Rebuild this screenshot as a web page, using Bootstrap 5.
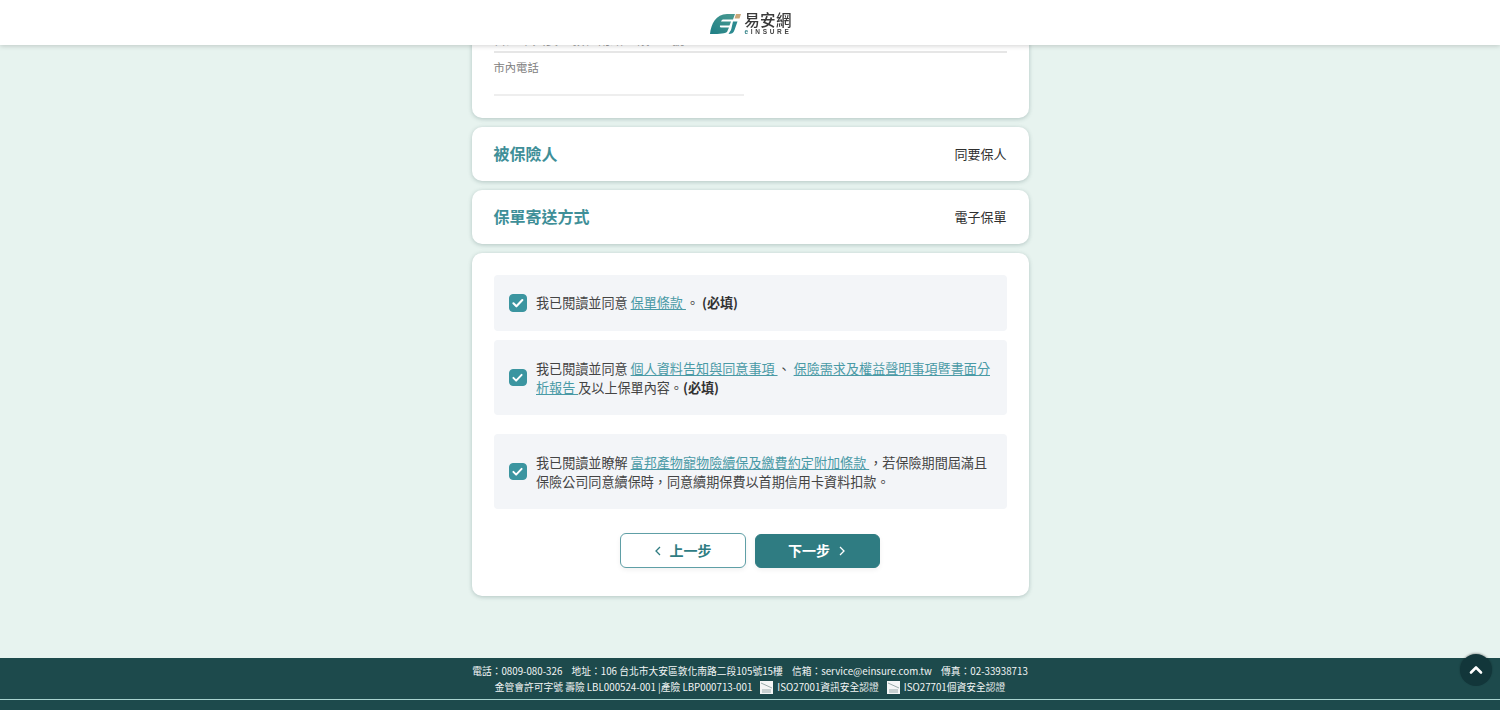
<!DOCTYPE html>
<html lang="zh-Hant">
<head>
    <meta charset="UTF-8">
    <meta name="viewport" content="width=device-width, initial-scale=1.0">
    <title>易安網 eINSURE</title>

    <link href="https://cdn.jsdelivr.net/npm/bootstrap@5.3.3/dist/css/bootstrap.min.css" rel="stylesheet">

    <style>
        html, body {
            height: 710px;
            overflow: hidden;
        }
        body {
            background: #e7f3ef;
            color: #333;
            font-family: "Noto Sans CJK TC", "Noto Sans", sans-serif;
        }
        .site-head {
            position: fixed;
            top: 0;
            left: 0;
            right: 0;
            height: 45px;
            background: #fff;
            box-shadow: 0 1px 5px rgba(0, 0, 0, .18);
            z-index: 10;
        }
        .logo-wrap {
            margin-left: 2px;
        }
        .logo-mark {
            margin: 2px 3px 0 0;
        }
        .logo-name {
            font-size: 15.5px;
            line-height: 16px;
            font-weight: 500;
            color: #3a3a3a;
            letter-spacing: .3px;
        }
        .logo-sub {
            font-family: "Liberation Sans", sans-serif;
            font-size: 6.5px;
            line-height: 7px;
            font-weight: 700;
            letter-spacing: 2.7px;
            margin-top: 1px;
            color: #444;
            white-space: nowrap;
        }
        .logo-sub b {
            color: #2f7f84;
        }
        .sheet-col {
            width: 557px;
            height: 658px;
            margin: 0 auto;
        }
        .sheet {
            background: #fff;
            border: 0;
            border-radius: 10px;
            box-shadow: 0 1px 4px rgba(40, 80, 80, .28);
            padding: 0 22px;
        }
        .sheet-top {
            height: 118px;
            border-radius: 0 0 10px 10px;
            margin-bottom: 9px;
        }
        .hidden-value {
            height: 53px;
            border-bottom: 2px solid #e6e6e6;
            font-size: 13px;
            line-height: 18px;
            padding-top: 30px;
            color: #999;
        }
        .field-label {
            font-size: 11.3px;
            line-height: 16px;
            margin-top: 6px;
            color: #808080;
        }
        .field-line {
            width: 250px;
            height: 21px;
            border-bottom: 2px solid #eee;
        }
        .sheet-row {
            height: 54px;
            margin-bottom: 9px;
        }
        .row-title {
            font-size: 16px;
            font-weight: 700;
            color: #3f8f98;
            margin-top: -2px;
        }
        .row-value {
            font-size: 13px;
            font-weight: 400;
            color: #2f2f2f;
        }
        .sheet-consent {
            height: 343px;
            padding-top: 22px;
        }
        .consent-box {
            background: #f3f5f8;
            border-radius: 4px;
            padding: 0 14px 0 15.5px;
            font-size: 13.1px;
            line-height: 19px;
            color: #444;
        }
        .consent-one > span {
            margin-top: -2px;
        }
        .consent-one {
            height: 56px;
            margin-bottom: 9px;
        }
        .consent-two {
            height: 75px;
            margin-bottom: 19px;
        }
        .consent-box .form-check-input {
            width: 17.5px;
            height: 17.5px;
            margin: 0 9.5px 0 0;
            flex: none;
            background-color: #3b95a0;
            border-color: #3b95a0;
            border-radius: 4px;
            box-shadow: none;
            background-image: url("data:image/svg+xml,%3csvg xmlns='http://www.w3.org/2000/svg' viewBox='0 0 20 20'%3e%3cpath fill='none' stroke='%23fff' stroke-linecap='round' stroke-linejoin='round' stroke-width='2.6' d='M4.500 10.500l3.700 3.700 7.300-7.700'/%3e%3c/svg%3e");
        }
        .consent-box a {
            color: #4a9aa6;
        }
        .consent-box b {
            color: #333;
            font-weight: 700;
        }
        .btn-step {
            height: 35px;
            border-radius: 6px;
            font-size: 14px;
            font-weight: 700;
            padding: 0;
            box-shadow: 0 2px 5px rgba(0, 0, 0, .06);
        }
        .btn-back {
            width: 126px;
            background: #fff;
            color: #2f7c82;
            border: 1px solid #5f9fa6;
        }
        .btn-next {
            width: 125px;
            height: 34px;
            background: #2f7c82;
            color: #fff;
            border: 1px solid #2f7c82;
        }
        .btn-row {
            gap: 9px;
            margin-top: 5px;
            margin-left: -1px;
        }
        .site-foot {
            height: 52px;
            background: #1d4a4c;
            color: #f2f5f5;
            font-size: 9.75px;
            line-height: 16px;
            padding-top: 5px;
        }
        .foot-rule {
            height: 1px;
            background: #a9d4d0;
            margin-top: 4px;
        }
        .foot-sep {
            margin-left: 7px;
        }
        .to-top {
            position: fixed;
            left: 1460px;
            top: 654px;
            width: 32px;
            height: 32px;
            border-radius: 50%;
            background: #12363a;
            box-shadow: 0 -1px 2px rgba(0, 0, 0, .3);
            z-index: 11;
        }
    </style>
</head>
<body>

    <!-- Header -->
    <header class="site-head d-flex justify-content-center align-items-center">
        <div class="logo-wrap d-flex align-items-center">
            <svg width="31" height="20" viewBox="0 0 31 20" class="logo-mark" aria-hidden="true">
                <defs>
                    <linearGradient id="leaf" x1="0" y1="1" x2="1" y2="0">
                        <stop offset="0" stop-color="#1f7f86"/>
                        <stop offset="1" stop-color="#4a9a90"/>
                    </linearGradient>
                </defs>
                <path fill="url(#leaf)" d="M0 20 C1 10 6 0 17 0 L25 0 L23 5.500 L13 5.500 C12 5.500 11.500 6.500 11 7.500 L21 7.500 L19.500 11.500 L10 11.500 C9.800 12.500 10 13.500 11 13.500 L19 13.500 L17 18 C14 20 6 20 0 20 Z"/>
                <path fill="#2c8a90" d="M23 7.500 L27.500 7.500 L24.500 16 C23.500 19 21.500 20 18.500 20 L20 17.500 C20.500 17 21 16 21.300 15 Z"/>
                <path fill="#c9a77a" d="M26 0 L31 0 L29.500 4.500 L24.500 4.500 Z"/>
            </svg>
            <div class="text-center">
                <div class="logo-name">易安網</div>
                <div class="logo-sub"><b>e</b>INSURE</div>
            </div>
        </div>
    </header>

    <main class="sheet-col">
        <!-- Contact info, scrolled up behind the header -->
        <section class="card sheet sheet-top">
            <div class="hidden-value">台北市大安區敦化南路二段105號</div>
            <div class="field-label">市內電話</div>
            <div class="field-line"></div>
        </section>

        <section class="card sheet sheet-row flex-row justify-content-between align-items-center">
            <span class="row-title">被保險人</span>
            <span class="row-value">同要保人</span>
        </section>

        <section class="card sheet sheet-row flex-row justify-content-between align-items-center">
            <span class="row-title">保單寄送方式</span>
            <span class="row-value">電子保單</span>
        </section>

        <!-- Consent -->
        <section class="card sheet sheet-consent">
            <label class="consent-box consent-one d-flex align-items-center">
                <input class="form-check-input" type="checkbox" checked>
                <span>我已閱讀並同意 <a href="#">保單條款 </a>。 <b>(必填)</b></span>
            </label>
            <label class="consent-box consent-two d-flex align-items-center">
                <input class="form-check-input" type="checkbox" checked>
                <span>我已閱讀並同意 <a href="#">個人資料告知與同意事項 </a>、 <a href="#">保險需求及權益聲明事項暨書面分析報告 </a>及以上保單內容。<b>(必填)</b></span>
            </label>
            <label class="consent-box consent-two d-flex align-items-center">
                <input class="form-check-input" type="checkbox" checked>
                <span>我已閱讀並瞭解 <a href="#">富邦產物寵物險續保及繳費約定附加條款 </a>，若保險期間屆滿且保險公司同意續保時，同意續期保費以首期信用卡資料扣款。</span>
            </label>
            <div class="btn-row d-flex justify-content-center align-items-center">
                <button class="btn btn-step btn-back d-flex justify-content-center align-items-center" type="button">
                    <svg width="8" height="12" viewBox="0 0 8 12" class="me-2" aria-hidden="true"><path d="M6 2 L2 6 L6 10" fill="none" stroke="currentColor" stroke-width="1.300"/></svg>
                    上一步
                </button>
                <button class="btn btn-step btn-next d-flex justify-content-center align-items-center" type="button">
                    下一步
                    <svg width="8" height="12" viewBox="0 0 8 12" class="ms-2" aria-hidden="true"><path d="M2 2 L6 6 L2 10" fill="none" stroke="currentColor" stroke-width="1.300"/></svg>
                </button>
            </div>
        </section>
    </main>

    <!-- Footer -->
    <footer class="site-foot text-center">
        <div>電話：0809-080-326<span class="foot-sep"></span> 地址：106 台北市大安區敦化南路二段105號15樓<span class="foot-sep"></span> 信箱：service@einsure.com.tw<span class="foot-sep"></span> 傳真：02-33938713</div>
        <div class="d-flex justify-content-center align-items-center">
            金管會許可字號 壽險 LBL000524-001 |產險 LBP000713-001
            <svg width="13" height="13" viewBox="0 0 13 13" class="ms-2 me-1" aria-hidden="true"><rect width="13" height="13" fill="#f4f6f6"/><path d="M1 2 L12 7 M2 9 H11 M2 11 H11" stroke="#9aa" stroke-width="1"/></svg>
            ISO27001資訊安全認證
            <svg width="13" height="13" viewBox="0 0 13 13" class="ms-2 me-1" aria-hidden="true"><rect width="13" height="13" fill="#f4f6f6"/><path d="M1 2 L12 7 M2 9 H11 M2 11 H11" stroke="#9aa" stroke-width="1"/></svg>
            ISO27701個資安全認證
        </div>
        <div class="foot-rule"></div>
    </footer>

    <a class="to-top d-flex justify-content-center align-items-center" href="#" aria-label="top">
        <svg width="14" height="10" viewBox="0 0 14 10" aria-hidden="true"><path d="M2 7.500 L7 2.500 L12 7.500" fill="none" stroke="#fff" stroke-width="2.600" stroke-linecap="round" stroke-linejoin="round"/></svg>
    </a>

    <script src="https://cdn.jsdelivr.net/npm/bootstrap@5.3.3/dist/js/bootstrap.bundle.min.js"></script>
</body>
</html>
